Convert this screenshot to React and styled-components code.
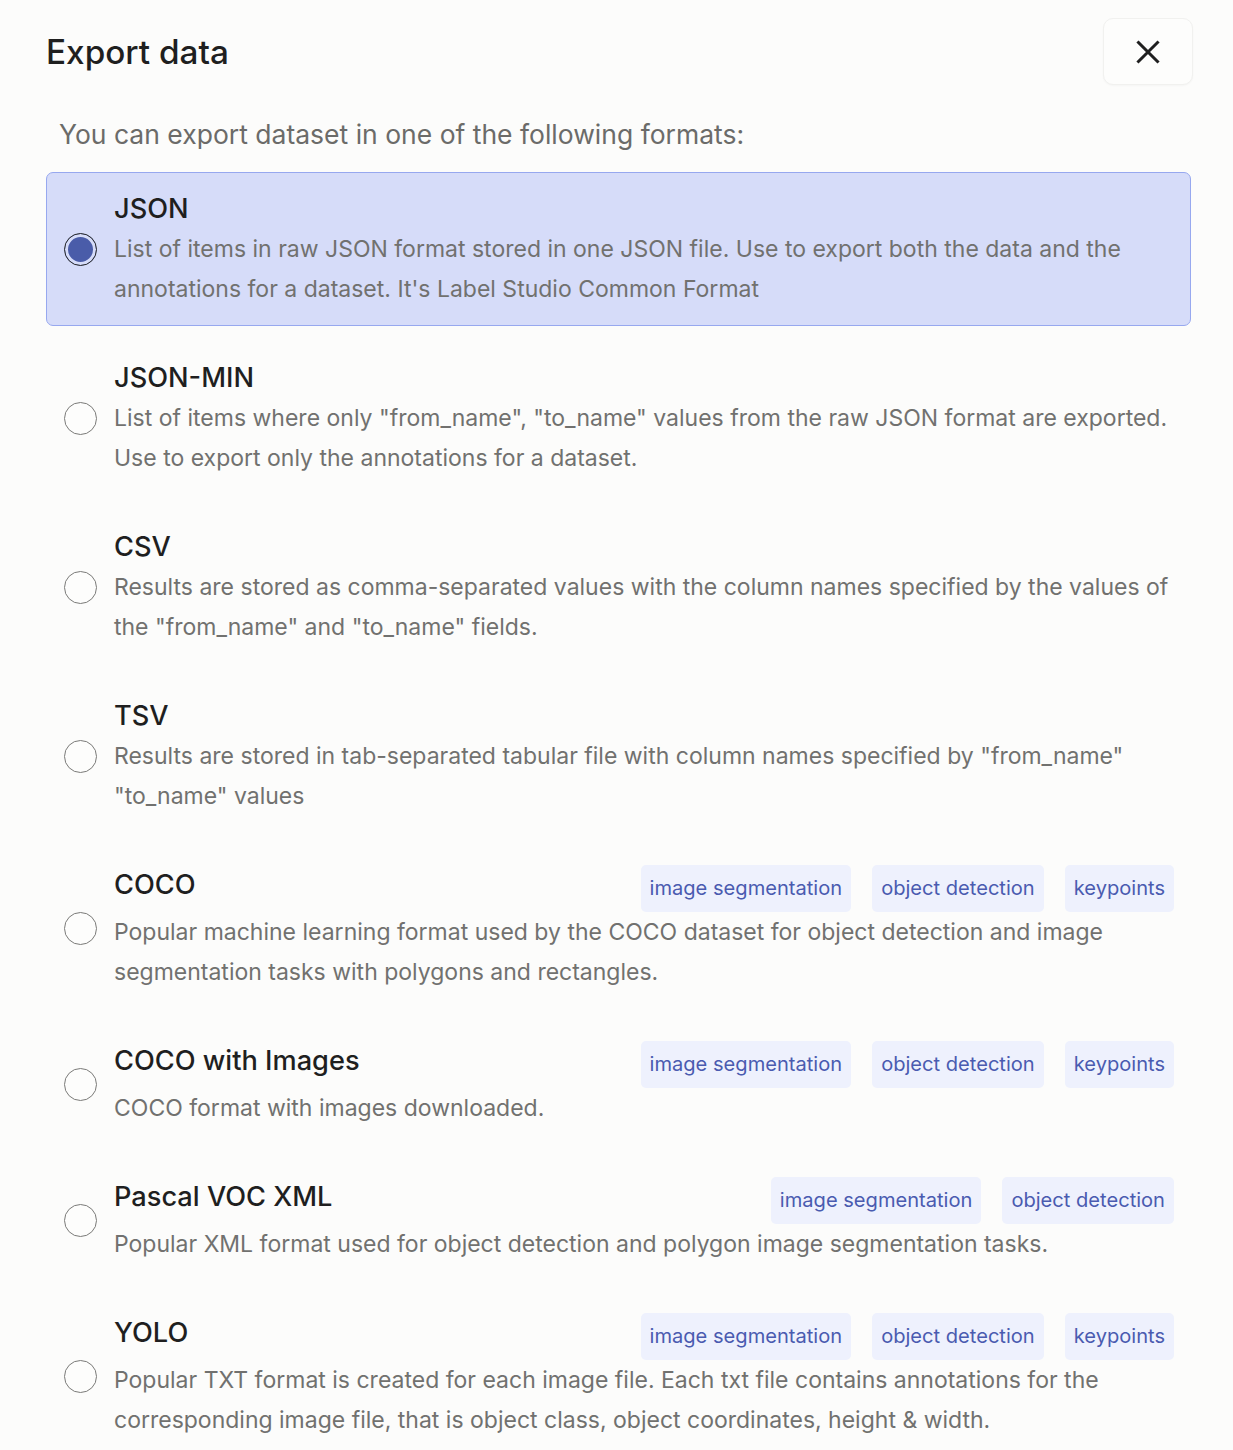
import React, { useState } from "react";
import styled, { createGlobalStyle, css } from "styled-components";

const FONT = `"Inter", "Lato", sans-serif`;

const GlobalStyle = createGlobalStyle`
  html, body { margin: 0; padding: 0; background: #fcfcfb; }
  body { font-family: ${FONT}; -webkit-font-smoothing: antialiased; }
  * { box-sizing: border-box; }
`;

const Page = styled.div`
  padding: 18px 42px 0 46px;
  min-height: 1450px;
  background: #fcfcfb;
`;

const Header = styled.header`
  display: flex;
  align-items: center;
  justify-content: space-between;
  margin-right: -2px;
`;

const Title = styled.h1`
  margin: 0;
  font-size: 33.3px;
  font-weight: 500;
  color: #1f1f1f;
`;

const CloseButton = styled.button`
  width: 90px;
  height: 67px;
  border: 1px solid #f1f1ef;
  border-radius: 10px;
  background: #fdfdfc;
  display: flex;
  align-items: center;
  justify-content: center;
  padding: 0;
  cursor: pointer;
  box-shadow: 0 1px 2px rgba(0, 0, 0, 0.03);
`;

const Subtitle = styled.p`
  margin: 29px 0 18px;
  padding: 0 13px;
  font-size: 26.5px;
  line-height: 40px;
  color: #6b6b69;
`;

const List = styled.div`
  display: flex;
  flex-direction: column;
  gap: 15px;
`;

const Item = styled.label`
  display: flex;
  align-items: center;
  gap: 17px;
  padding: 16px 16px 16px 17px;
  border: 1px solid transparent;
  border-radius: 7px;
  cursor: pointer;
  ${(p) =>
    p.$selected &&
    css`
      background: #d6dcf9;
      border-color: #97a8ef;
    `}
`;

const Radio = styled.span`
  flex: none;
  width: 33px;
  height: 33px;
  border-radius: 50%;
  border: 1px solid ${(p) => (p.$checked ? "#2b2b2b" : "#7a7a78")};
  background: ${(p) => (p.$checked ? "#4a5ca9" : "#fdfdfc")};
  box-shadow: ${(p) => (p.$checked ? "inset 0 0 0 3px #d6dcf9" : "none")};
`;

const Body = styled.div`
  flex: 1;
  min-width: 0;
`;

const ItemHeader = styled.div`
  display: flex;
  align-items: flex-start;
  justify-content: space-between;
  min-height: 40px;
`;

const ItemTitle = styled.div`
  font-size: 27.2px;
  font-weight: 500;
  color: #1f1f1f;
  line-height: 40px;
`;

const Tags = styled.div`
  display: flex;
  gap: 21px;
`;

const Tag = styled.span`
  height: 47px;
  line-height: 46px;
  padding: 0 9px;
  border-radius: 5px;
  background: #eef1fd;
  color: #4a5bb0;
  font-size: 20.1px;
`;

const Description = styled.div`
  font-size: 23px;
  line-height: 40px;
  color: #71716f;
`;

const formats = [
  {
    title: "JSON",
    desc: "List of items in raw JSON format stored in one JSON file. Use to export both the data and the annotations for a dataset. It's Label Studio Common Format",
  },
  {
    title: "JSON-MIN",
    desc: 'List of items where only "from_name", "to_name" values from the raw JSON format are exported. Use to export only the annotations for a dataset.',
  },
  {
    title: "CSV",
    desc: 'Results are stored as comma-separated values with the column names specified by the values of the "from_name" and "to_name" fields.',
  },
  {
    title: "TSV",
    desc: 'Results are stored in tab-separated tabular file with column names specified by "from_name" "to_name" values',
  },
  {
    title: "COCO",
    tags: ["image segmentation", "object detection", "keypoints"],
    desc: "Popular machine learning format used by the COCO dataset for object detection and image segmentation tasks with polygons and rectangles.",
  },
  {
    title: "COCO with Images",
    tags: ["image segmentation", "object detection", "keypoints"],
    desc: "COCO format with images downloaded.",
  },
  {
    title: "Pascal VOC XML",
    tags: ["image segmentation", "object detection"],
    desc: "Popular XML format used for object detection and polygon image segmentation tasks.",
  },
  {
    title: "YOLO",
    tags: ["image segmentation", "object detection", "keypoints"],
    desc: "Popular TXT format is created for each image file. Each txt file contains annotations for the corresponding image file, that is object class, object coordinates, height & width.",
  },
];

const CloseIcon = () => (
  <svg width="24" height="24" viewBox="0 0 24 24" fill="none" stroke="#1f1f1f" strokeWidth="3" strokeLinecap="square">
    <path d="M2.5 2.5 L21.5 21.5 M21.5 2.5 L2.5 21.5" />
  </svg>
);

export default function App() {
  const [selected, setSelected] = useState(0);
  return (
    <>
      <GlobalStyle />
      <Page>
        <Header>
          <Title>Export data</Title>
          <CloseButton aria-label="Close">
            <CloseIcon />
          </CloseButton>
        </Header>
        <Subtitle>You can export dataset in one of the following formats:</Subtitle>
        <List>
          {formats.map((f, i) => (
            <Item key={f.title} $selected={i === selected} onClick={() => setSelected(i)}>
              <Radio $checked={i === selected} />
              <Body>
                <ItemHeader>
                  <ItemTitle>{f.title}</ItemTitle>
                  {f.tags && (
                    <Tags>
                      {f.tags.map((t) => (
                        <Tag key={t}>{t}</Tag>
                      ))}
                    </Tags>
                  )}
                </ItemHeader>
                <Description>{f.desc}</Description>
              </Body>
            </Item>
          ))}
        </List>
      </Page>
    </>
  );
}
